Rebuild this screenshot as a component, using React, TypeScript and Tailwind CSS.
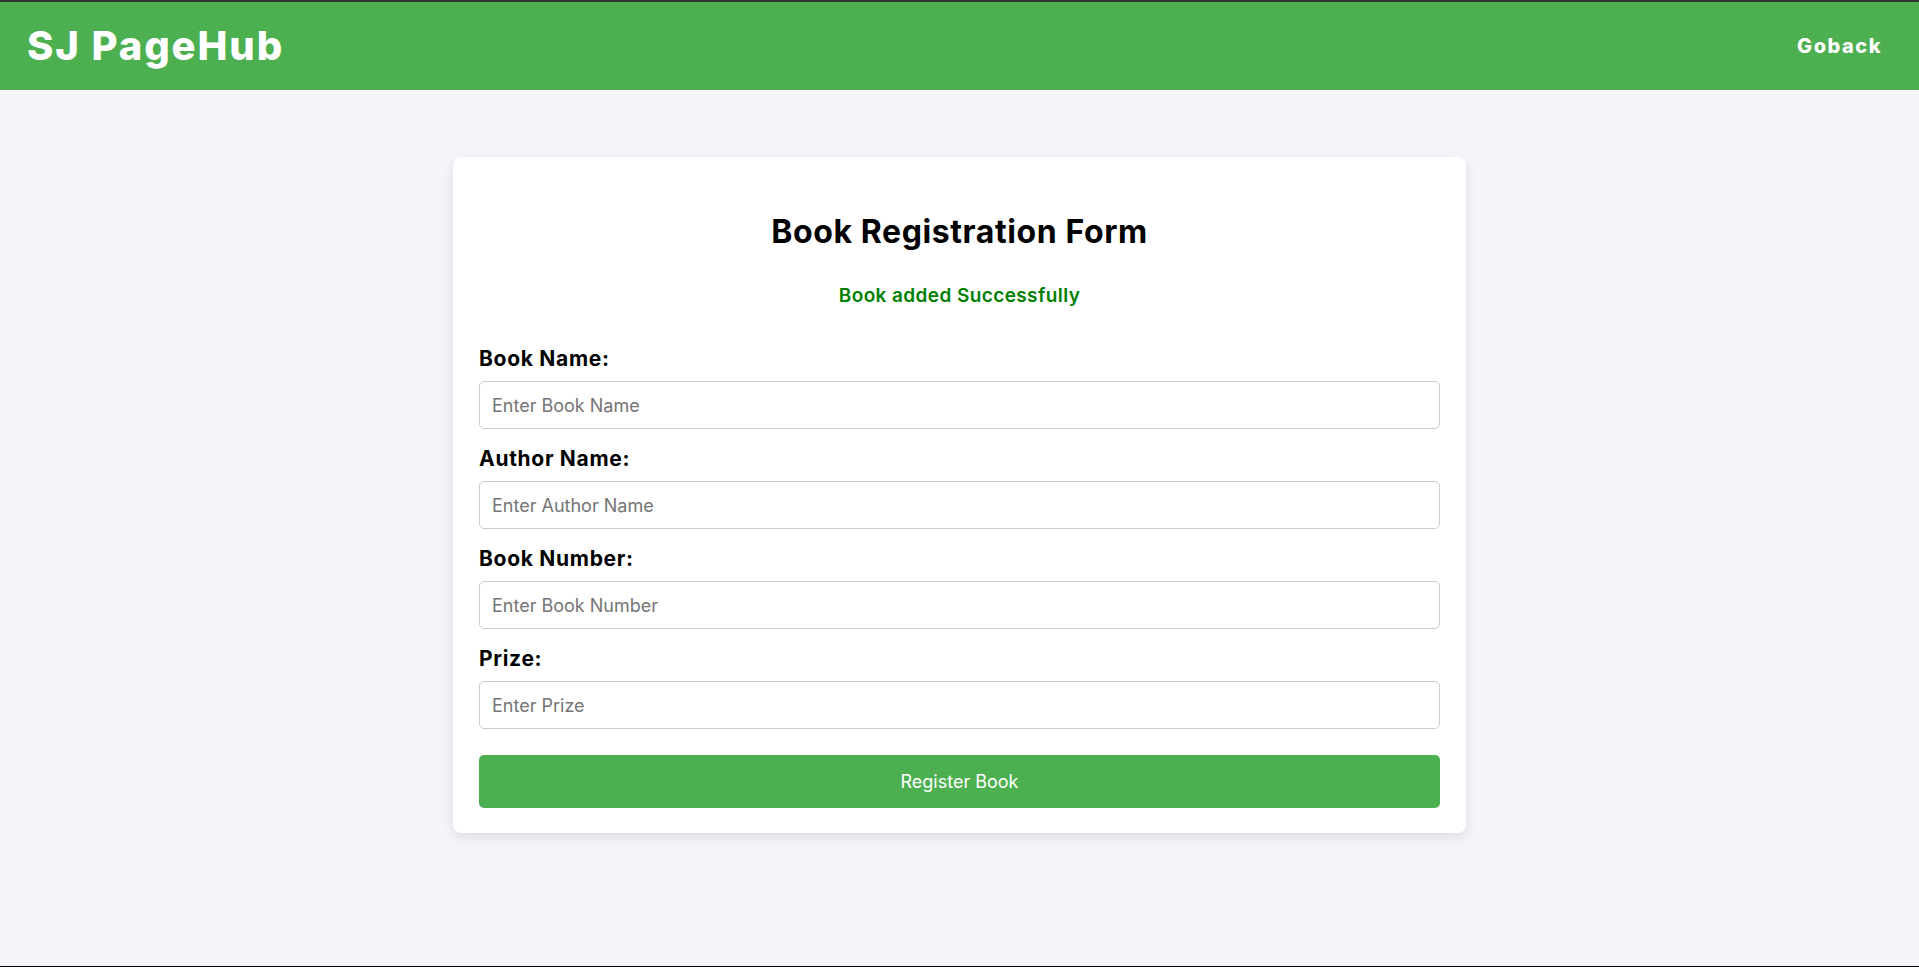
import { useState } from 'react';

const fields = [
  { key: 'name', label: 'Book Name:', placeholder: 'Enter Book Name' },
  { key: 'author', label: 'Author Name:', placeholder: 'Enter Author Name' },
  { key: 'number', label: 'Book Number:', placeholder: 'Enter Book Number' },
  { key: 'prize', label: 'Prize:', placeholder: 'Enter Prize' },
];

export default function App() {
  const [values, setValues] = useState<Record<string, string>>({});

  return (
    <div className="h-[967px] flex flex-col bg-[#f4f4f9] border-b border-black font-['Inter',sans-serif]">
      <header className="h-[90px] flex-shrink-0 flex items-center justify-between border-t-2 border-[#333] bg-[#4CAF50] pl-[27px] pr-[37px] text-white">
        <h1 className="text-[40px] leading-none font-extrabold tracking-[1.9px]">SJ PageHub</h1>
        <a href="#" className="text-[20px] leading-none font-extrabold tracking-[1.5px]">Goback</a>
      </header>

      <main className="flex-1">
        <div className="mt-[67px] mx-auto w-[1013px] bg-white rounded-[8px] shadow-[0_4px_12px_rgba(0,0,0,0.1)] px-[26px] pt-[55px] pb-[25px]">
          <h2 className="text-center text-[32px] leading-[40px] font-bold tracking-[0.6px] text-black">
            Book Registration Form
          </h2>
          <p className="mt-[32px] text-center text-[19px] leading-[24px] font-semibold tracking-[0.4px] text-[#008000]">
            Book added Successfully
          </p>

          <form className="mt-[21px] flex flex-col" onSubmit={(e) => e.preventDefault()}>
            {fields.map((f) => (
              <div key={f.key} className="mt-[18px]">
                <label className="block text-[21px] leading-[24px] font-bold tracking-[0.7px] text-black">
                  {f.label}
                </label>
                <input
                  type="text"
                  value={values[f.key] ?? ''}
                  onChange={(e) => setValues({ ...values, [f.key]: e.target.value })}
                  placeholder={f.placeholder}
                  className="mt-[10px] block w-full h-[48px] border border-[#ccc] rounded-[5px] px-[12px] text-[18px] text-black placeholder:text-[#757575] outline-none"
                />
              </div>
            ))}
            <button
              type="submit"
              className="mt-[26px] w-full h-[53px] rounded-[5px] bg-[#4CAF50] text-white text-[18px]"
            >
              Register Book
            </button>
          </form>
        </div>
      </main>
    </div>
  );
}
